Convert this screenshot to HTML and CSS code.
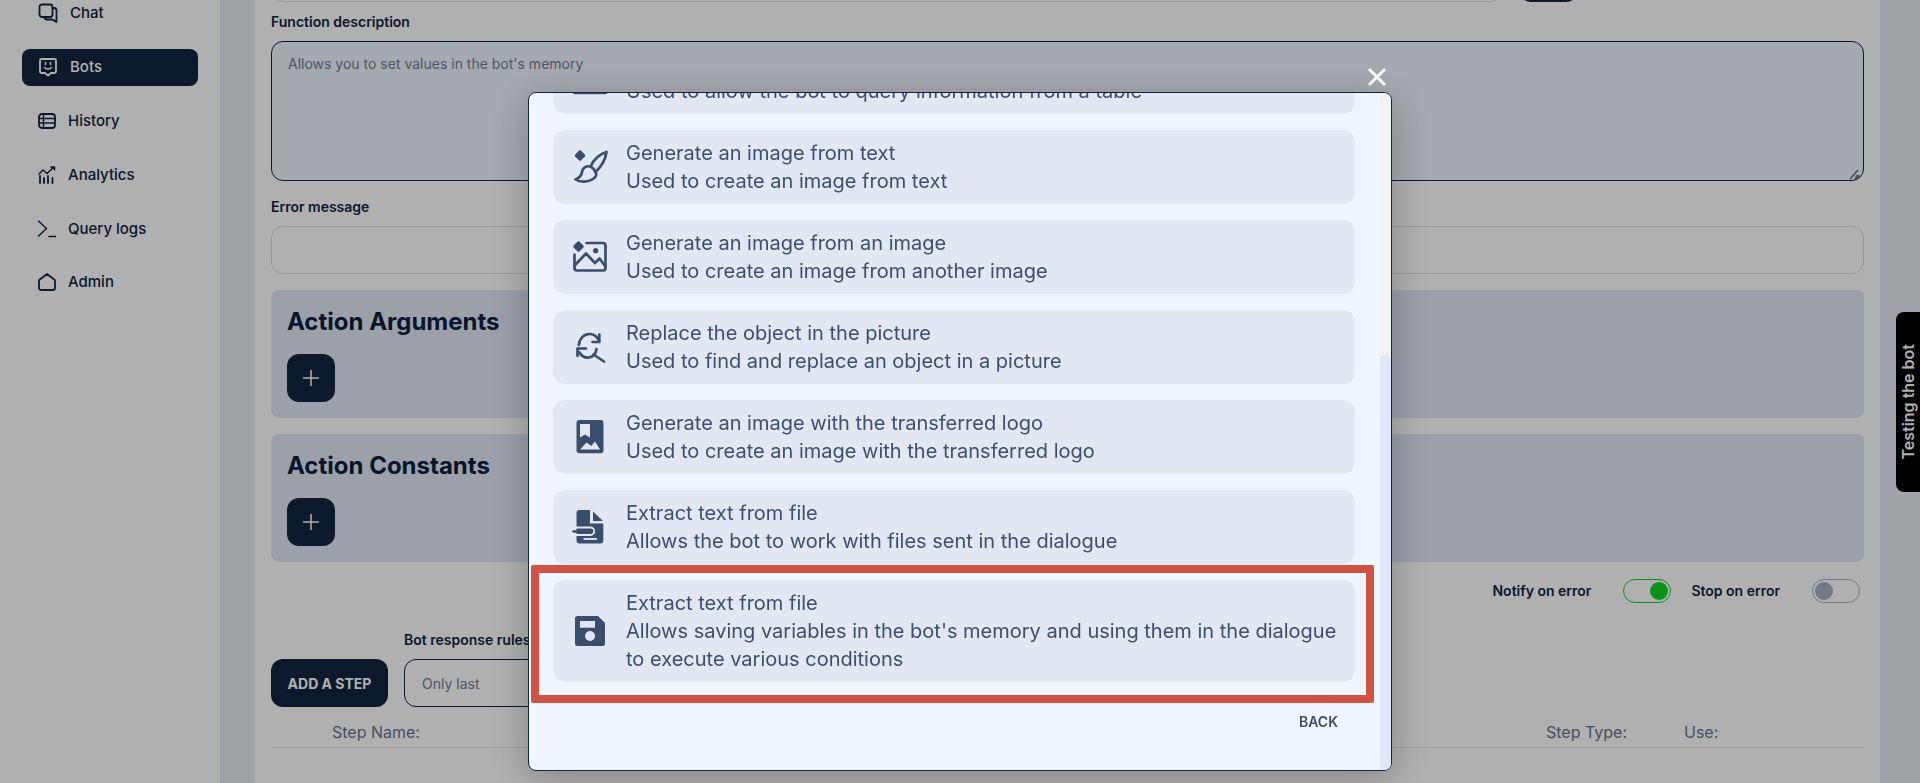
FILE: index.html
```html
<!DOCTYPE html>
<html lang="en">
<head>
<meta charset="utf-8">
<title>Bots</title>
<link rel="stylesheet" href="styles.css">
</head>
<body>
<div class="page">
  <aside class="sidebar">
    <nav class="nav">
      <a class="nav-item">
        <svg class="nav-icon-wide" viewBox="0 0 20 20"><path d="M1.500 4A2.500 2.500 0 0 1 4 1.500h8A2.500 2.500 0 0 1 14.500 4v7.500A2.500 2.500 0 0 1 12 14H4a2.500 2.500 0 0 1-2.500-2.500z"/><path d="M14.500 5H16a2.500 2.500 0 0 1 2.500 2.500V19l-4-2.500H9A2.500 2.500 0 0 1 6.500 14"/></svg>
        <span>Chat</span>
      </a>
      <a class="nav-item nav-active">
        <svg class="nav-icon-wide" viewBox="0 0 20 20"><path d="M3.500 2h13A1.500 1.500 0 0 1 18 3.500v11a1.500 1.500 0 0 1-1.500 1.500H13l-3 2.500L7 16H3.500A1.500 1.500 0 0 1 2 14.500v-11A1.500 1.500 0 0 1 3.500 2z"/><path class="thin" d="M6.500 10.500c1.800 2 5.200 2 7 0"/><path class="thin" d="M7.500 5.500v2M12.500 5.500v2"/></svg>
        <span>Bots</span>
      </a>
      <a class="nav-item">
        <svg class="nav-icon" viewBox="0 0 18 18"><rect x="1" y="2" width="16" height="14" rx="3"/><path class="thin" d="M1 6.500h16M1 11h16M5.500 2.500v13"/></svg>
        <span>History</span>
      </a>
      <a class="nav-item">
        <svg class="nav-icon" viewBox="0 0 18 18"><path d="M2 10v7M6 12v5M10 10v7M14.500 12v5"/><path class="thin" d="M1 8l4-4 4 3.500L16 1M13 1h3.500v3"/></svg>
        <span>Analytics</span>
      </a>
      <a class="nav-item">
        <svg class="nav-icon" viewBox="0 0 18 18"><path class="thin" d="M.5 1l8 7.500-8 7.500M11 16.500h7"/></svg>
        <span>Query logs</span>
      </a>
      <a class="nav-item nav-last">
        <svg class="nav-icon" viewBox="0 0 18 18"><path d="M9 1l7.200 5.500a1.500 1.500 0 0 1 .8 1.300V15a2 2 0 0 1-2 2H3a2 2 0 0 1-2-2V7.800a1.500 1.500 0 0 1 .8-1.300z"/></svg>
        <span>Admin</span>
      </a>
    </nav>
  </aside>

  <main class="main">
    <div class="name-row">
      <input class="field name-input" type="text">
      <button class="name-btn" type="button"></button>
    </div>

    <label class="label label-first">Function description</label>
    <div class="textarea-wrap">
      <textarea class="textarea" placeholder="Allows you to set values in the bot's memory"></textarea>
      <svg class="grip" viewBox="0 0 12 12"><path d="M1 11l8-9M6 11l4-4"/><circle cx="8.500" cy="9" r="1.500"/></svg>
    </div>

    <label class="label label-next">Error message</label>
    <input class="field" type="text">

    <section class="action-box">
      <h2 class="action-title">Action Arguments</h2>
      <button class="plus" type="button"><svg viewBox="0 0 16 16"><path d="M8 0v16M0 8h16"/></svg></button>
    </section>
    <section class="action-box">
      <h2 class="action-title">Action Constants</h2>
      <button class="plus" type="button"><svg viewBox="0 0 16 16"><path d="M8 0v16M0 8h16"/></svg></button>
    </section>

    <div class="toggles">
      <span class="toggle-label">Notify on error</span>
      <span class="toggle toggle-on"><span class="knob"></span></span>
      <span class="toggle-label">Stop on error</span>
      <span class="toggle"><span class="knob"></span></span>
    </div>

    <div class="step-controls">
      <button class="add-step" type="button">ADD A STEP</button>
      <div class="rules">
        <span class="rules-label">Bot response rules</span>
        <div class="select">Only last</div>
      </div>
    </div>

    <div class="step-head">
      <span class="step-name">Step Name:</span>
      <span>Step Type:</span>
      <span>Use:</span>
    </div>
  </main>

  <div class="test-tab"><span>Testing the bot</span></div>
</div>

<div class="overlay">
  <svg class="close" viewBox="0 0 20 20"><path d="M2 2l16 16M18 2L2 18"/></svg>
  <div class="modal">
    <div class="modal-body">
      <div class="modal-list">
        <div class="card">
          <svg class="card-icon" viewBox="0 0 40 40"><rect class="line" x="3.500" y="20" width="35" height="16" rx="3"/></svg>
          <div class="card-text"><div>Allows the bot to query a table</div><div>Used to allow the bot to query information from a table</div></div>
        </div>
        <div class="card">
          <svg class="card-icon" viewBox="0 0 40 40">
            <path class="gem" d="M11 4.500l4 4-4 4-4-4z"/>
            <path class="line" d="M21.500 19.500C25 12 31 7 37.500 5 36.500 12 32 20 26.500 25"/>
            <path class="line" d="M21.500 19.500C17 18.500 13.500 21 13 25 12.500 29 10 31 6.500 32.500 11 35.500 19 35.500 24 32 27.500 29.500 28 27 26.500 25 25 22 23.500 20.500 21.500 19.500z"/>
          </svg>
          <div class="card-text"><div>Generate an image from text</div><div>Used to create an image from text</div></div>
        </div>
        <div class="card">
          <svg class="card-icon" viewBox="0 0 40 40">
            <path class="gem" d="M9.500 5.500l4 4-4 4-4-4z"/>
            <path class="line" d="M17.500 6H34a2.500 2.500 0 0 1 2.500 2.500V31a2.500 2.500 0 0 1-2.500 2.500H8A2.500 2.500 0 0 1 5.500 31V17.500"/>
            <path class="line" d="M6 28l11-11.500 9 9.500 4.500-4.500 6 8"/>
            <circle class="solid" cx="26.700" cy="13.700" r="2.600"/>
          </svg>
          <div class="card-text"><div>Generate an image from an image</div><div>Used to create an image from another image</div></div>
        </div>
        <div class="card">
          <svg class="card-icon" viewBox="0 0 40 40">
            <path class="line" d="M9.800 18C10.500 11 15.500 7 20.500 7c4 0 7.500 2.500 9.500 6.500"/>
            <path class="line" d="M30.300 7.500V15H23.500"/>
            <path class="line" d="M8.500 29V21.500H17"/>
            <path class="line" d="M10.500 25.500c2 3.500 5.500 5.500 9.500 5 4-.5 7-4 7.500-8.500"/>
            <path class="line" d="M24.500 27.500L35 34.500"/>
          </svg>
          <div class="card-text"><div>Replace the object in the picture</div><div>Used to find and replace an object in a picture</div></div>
        </div>
        <div class="card">
          <svg class="card-icon" viewBox="0 0 40 40">
            <rect class="solid" x="7.500" y="3" width="27" height="33.300" rx="3"/>
            <path class="hole" d="M11 7h10v13.500l-5-3-5 3z"/>
            <path class="hole" d="M11 32.500l6.500-7 4.800 3.500 3.700-4.500 5 8z"/>
          </svg>
          <div class="card-text"><div>Generate an image with the transferred logo</div><div>Used to create an image with the transferred logo</div></div>
        </div>
        <div class="card">
          <svg class="card-icon" viewBox="0 0 40 40">
            <path class="solid" d="M10.500 3H21v13.500h13.300v17a3 3 0 0 1-3 3H10.500a3 3 0 0 1-3-3v-27.500a3 3 0 0 1 3-3z"/>
            <path class="solid" d="M24 4.500l10 9.500H24z"/>
            <path class="hole-line" d="M6 20.500h15.500a3 3 0 0 1 0 7.500H6"/>
            <path class="hole-line" d="M14.500 32H28"/>
            <path class="dark-line" d="M4.500 24.500H20"/>
          </svg>
          <div class="card-text"><div>Extract text from file</div><div>Allows the bot to work with files sent in the dialogue</div></div>
        </div>
        <div class="card card-marked">
          <svg class="card-icon" viewBox="0 0 40 40">
            <path class="solid" d="M8.500 5H29l7 7v20.500a2.500 2.500 0 0 1-2.500 2.500h-25A2.500 2.500 0 0 1 6 32.500v-25A2.500 2.500 0 0 1 8.500 5z"/>
            <rect class="hole" x="11" y="10" width="15" height="6.700"/>
            <circle class="hole" cx="21" cy="25" r="5"/>
          </svg>
          <div class="card-text"><div>Extract text from file</div><div>Allows saving variables in the bot's memory and using them in the dialogue to execute various conditions</div></div>
        </div>
      </div>
      <div class="modal-actions"><span class="back">BACK</span></div>
    </div>
    <div class="scroll-track"><div class="scroll-thumb"></div></div>
  </div>
</div>
</body>
</html>
```

FILE: styles.css
```css
* { box-sizing: border-box; }
html, body { margin: 0; height: 100%; }
body {
  font-family: Inter, "Noto Sans", sans-serif;
  background: #e8ecf3;
  color: #10253f;
  overflow: hidden;
}
.page {
  position: relative;
  display: flex;
  height: 783px;
  overflow: hidden;
}

/* sidebar */
.sidebar {
  flex: 0 0 220px;
  background: #fff;
  padding: 0 22px;
}
.nav {
  display: flex;
  flex-direction: column;
  gap: 17px;
  margin-top: -5px;
}
.nav-item {
  display: flex;
  align-items: center;
  gap: 12px;
  height: 37px;
  padding: 0 16px 2px;
  border-radius: 8px;
  font-size: 15px;
  font-weight: 500;
  color: #10253f;
}
.nav-last { margin-top: -1px; }
.nav-active { background: #10253f; color: #fff; }
.nav-icon, .nav-icon-wide {
  flex: none;
  fill: none;
  stroke: currentColor;
  stroke-width: 1.800;
  stroke-linecap: round;
  stroke-linejoin: round;
}
.nav-icon { width: 18px; height: 18px; }
.nav-icon-wide { width: 20px; height: 20px; }
.thin { stroke-width: 1.500; }

/* main */
.main {
  flex: 0 0 1625px;
  margin-left: 35px;
  background: #fff;
  padding: 0 16px;
  display: flex;
  flex-direction: column;
}
.name-row {
  display: flex;
  gap: 16px;
  margin-top: -46px;
}
.name-btn {
  width: 59px;
  height: 48px;
  border: 0;
  border-radius: 12px;
  background: #10253f;
}
.label {
  display: block;
  font-size: 14px;
  line-height: 20px;
  font-weight: 600;
  margin-bottom: 9px;
}
.label-first { margin-top: 10px; }
.label-next { margin-top: 16px; }
.field {
  display: block;
  width: 100%;
  height: 48px;
  background: #fff;
  border: 1px solid #d6d9df;
  border-radius: 12px;
  flex: none;
}
.name-row .name-input { width: 1232px; }
.textarea-wrap { position: relative; flex: none; height: 140px; }
.textarea {
  display: block;
  width: 100%;
  height: 140px;
  padding: 12px 16px;
  background: #f0f5ff;
  border: 1.500px solid #10253f;
  border-radius: 12px;
  font: 400 14px/20px Inter, sans-serif;
  color: #727d93;
  resize: none;
}
.textarea::placeholder { color: #727d93; opacity: 1; }
.grip {
  position: absolute;
  right: 3px;
  bottom: 1px;
  width: 12px;
  height: 12px;
  fill: none;
  stroke: #5c6068;
  stroke-width: 1.200;
}
.action-box {
  flex: none;
  height: 128px;
  margin-top: 16px;
  padding: 16px;
  background: #e2e8f5;
  border-radius: 8px;
}
.action-title {
  margin: 0 0 16px;
  font-size: 24px;
  line-height: 32px;
  font-weight: 700;
  color: #0b2040;
}
.plus {
  display: flex;
  align-items: center;
  justify-content: center;
  width: 48px;
  height: 48px;
  padding: 0;
  border: 0;
  border-radius: 12px;
  background: #10253f;
}
.plus svg { width: 16px; height: 16px; fill: none; stroke: #fff; stroke-width: 1.500; }

.toggles {
  display: flex;
  align-items: center;
  justify-content: flex-end;
  margin-top: 17px;
  padding-right: 4px;
  height: 24px;
}
.toggle-label { font-size: 14px; font-weight: 600; margin-right: 32px; line-height: 24px; }
.toggle {
  display: flex;
  align-items: center;
  width: 48px;
  height: 24px;
  padding: 0 2px;
  border: 1px solid #a5afc2;
  border-radius: 12px;
}
.toggle + .toggle-label { margin-left: 20px; }
.knob { width: 18px; height: 18px; border-radius: 50%; background: #a5afc2; }
.toggle-on { border-color: #0ed623; justify-content: flex-end; }
.toggle-on .knob { background: #0ed623; }

.step-controls {
  display: flex;
  align-items: flex-end;
  gap: 16px;
  margin-top: 27px;
}
.add-step {
  width: 117px;
  height: 48px;
  border: 0;
  border-radius: 12px;
  background: #10253f;
  color: #fff;
  font: 700 14px Inter, sans-serif;
}
.rules { display: flex; flex-direction: column; gap: 9px; }
.rules-label { font-size: 14px; line-height: 20px; font-weight: 600; }
.select {
  display: flex;
  align-items: center;
  width: 400px;
  height: 48px;
  padding-left: 17px;
  border: 1px solid #10253f;
  border-radius: 12px;
  font-size: 14px;
  color: #727d93;
}
.step-head {
  display: grid;
  grid-template-columns: 1fr 138px 180px;
  margin-top: 13px;
  padding-bottom: 3px;
  border-bottom: 1px solid #e4e7ee;
  font-size: 16px;
  line-height: 24px;
  color: #66728c;
}
.step-name { padding-left: 61px; }

.test-tab {
  position: absolute;
  right: 0;
  top: 312px;
  width: 24px;
  height: 180px;
  display: flex;
  align-items: center;
  justify-content: center;
  background: #000;
  border-radius: 8px 0 0 8px;
  color: #fff;
  font-size: 16px;
  font-weight: 600;
}
.test-tab span { writing-mode: vertical-rl; transform: rotate(180deg); white-space: nowrap; }

/* modal */
.overlay {
  position: fixed;
  inset: 0;
  background: rgba(0, 0, 0, .31);
}
.close {
  position: absolute;
  left: 1367px;
  top: 67px;
  width: 20px;
  height: 20px;
  fill: none;
  stroke: #fff;
  stroke-width: 3;
}
.modal {
  position: absolute;
  left: 528px;
  top: 92px;
  width: 864px;
  height: 679px;
  display: flex;
  overflow: hidden;
  background: #f0f6ff;
  border: 1px solid #10253f;
  border-radius: 8px;
  box-shadow: 0 8px 40px rgba(0, 0, 0, .25);
}
.modal-body {
  flex: 1;
  min-width: 0;
  padding: 0 25px 0 24px;
  overflow: hidden;
}
.modal-list {
  display: flex;
  flex-direction: column;
  gap: 16px;
  margin-top: -53px;
}
.card {
  position: relative;
  display: flex;
  align-items: center;
  gap: 17px;
  padding: 9px 16px;
  background: #e2e8f3;
  border-radius: 12px;
}
.card-marked::after {
  content: "";
  position: absolute;
  inset: -15px -19px -21px -22px;
  border: 8px solid #d05243;
  border-radius: 2px;
}
.card-icon { flex: none; width: 40px; height: 40px; }
.card-text { font-size: 20px; line-height: 28px; color: #3d4f6e; }
.line { fill: none; stroke: #394e6d; stroke-width: 2.700; stroke-linecap: round; stroke-linejoin: round; }
.gem { fill: #394e6d; stroke: #394e6d; stroke-width: 2.500; stroke-linejoin: round; }
.solid { fill: #394e6d; }
.hole { fill: #e2e8f3; }
.hole-line { fill: none; stroke: #e2e8f3; stroke-width: 1.800; }
.dark-line { fill: none; stroke: #394e6d; stroke-width: 2.400; stroke-linecap: round; }
.modal-actions { display: flex; justify-content: flex-end; margin-top: 30px; padding-right: 17px; }
.back { font-size: 14px; line-height: 20px; font-weight: 600; color: #3d4f6e; }
.scroll-track { flex: 0 0 11px; background: #f2f2f2; }
.scroll-thumb {
  height: 100%;
  margin-top: 262px;
  background: #dfe8fa;
  border-radius: 6px 6px 0 0;
}
```
